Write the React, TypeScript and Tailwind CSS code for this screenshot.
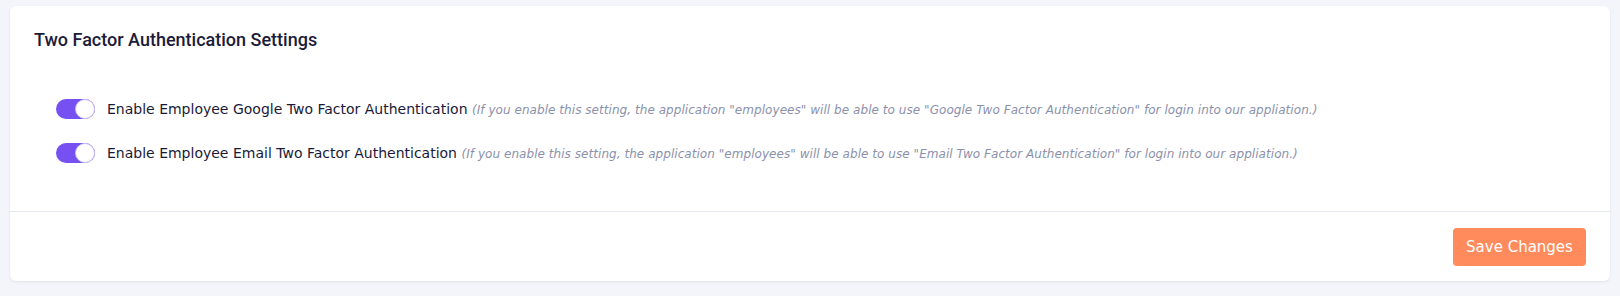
import React from 'react'

const rows = [
  {
    label: 'Enable Employee Google Two Factor Authentication',
    hint: '(If you enable this setting, the application "employees" will be able to use "Google Two Factor Authentication" for login into our appliation.)',
  },
  {
    label: 'Enable Employee Email Two Factor Authentication',
    hint: '(If you enable this setting, the application "employees" will be able to use "Email Two Factor Authentication" for login into our appliation.)',
  },
]

const Toggle = () => {
  return (
    <span className="relative inline-flex h-5 w-[39px] shrink-0 items-center rounded-full bg-[#7650f0]">
      <span className="absolute right-0 h-5 w-5 rounded-full border border-[#c9bef7] bg-white" />
    </span>
  )
}

const App = () => {
  return (
    <div className="min-h-[296px] bg-[#f4f5fa] px-[10px] pt-[6px] font-['DejaVu_Sans',sans-serif]">
      <div className="rounded-md bg-white shadow-[0_1px_3px_rgba(0,0,0,0.08)]">
        {/* header + settings */}
        <div className="px-6 pt-[22px] pb-[46px]">
          <h2 className="font-['Roboto',sans-serif] text-[18px] font-medium leading-6 text-[#1b1b3a]">
            Two Factor Authentication Settings
          </h2>

          <div className="mt-[45px] flex flex-col gap-5 pl-[22px]">
            {rows.map((r) => (
              <div key={r.label} className="flex h-6 items-center gap-[12px]">
                <Toggle />
                <p className="whitespace-nowrap text-[14px] text-[#1a1a38]">
                  {r.label}{' '}
                  <i className="text-[12px] tracking-[0.05px] text-[#8b91ab]">{r.hint}</i>
                </p>
              </div>
            ))}
          </div>
        </div>

        {/* footer */}
        <div className="flex justify-end border-t border-[#e6e8ef] px-6 pt-4 pb-[15px]">
          <button className="h-[38px] w-[133px] rounded-[4px] bg-[#ff8a5c] text-[15px] text-white">
            Save Changes
          </button>
        </div>
      </div>
    </div>
  )
}

export default App
